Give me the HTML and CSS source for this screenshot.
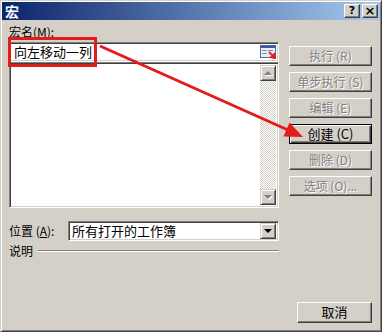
FILE: index.html
```html
<!DOCTYPE html>
<html lang="zh-CN">
<head>
    <meta charset="UTF-8">
    <meta name="viewport" content="width=device-width, initial-scale=1.0">
    <title>宏</title>
    <link rel="stylesheet" href="styles.css">
</head>
<body>
    <div class="dialog">
        <div class="title-bar">
            <span class="title">宏</span>
            <div class="title-buttons">
                <span class="tb-btn">?</span>
                <span class="tb-btn close">×</span>
            </div>
        </div>

        <div class="dialog-body">
            <div class="left-col">
                <div class="field-label">宏名(<u>M</u>):</div>
                <div class="name-input">
                    <span class="name-text">向左移动一列</span>
                    <span class="input-icon">
                        <svg width="16" height="14" viewBox="0 0 16 14">
                            <rect x="0.5" y="0.5" width="15" height="12" fill="#e8eef8" stroke="#4a6a9c"/>
                            <rect x="1" y="1" width="14" height="2" fill="#3a5a9c"/>
                            <rect x="2" y="5" width="5" height="1" fill="#7a8aaa"/>
                            <rect x="2" y="8" width="5" height="1" fill="#7a8aaa"/>
                            <rect x="8" y="5" width="5" height="1" fill="#7a8aaa"/>
                            <path d="M9 7 L15 13 M10 12 L15 13 L14 8" stroke="#e02020" stroke-width="2" fill="none"/>
                        </svg>
                    </span>
                </div>
                <div class="macro-list">
                    <div class="list-area"></div>
                    <div class="scrollbar">
                        <span class="sb-btn"><span class="arrow-up"></span></span>
                        <span class="sb-track"></span>
                        <span class="sb-btn"><span class="arrow-down"></span></span>
                    </div>
                </div>
                <div class="location-row">
                    <span class="loc-label">位置 (<u>A</u>):</span>
                    <div class="combo">
                        <span class="combo-text">所有打开的工作簿</span>
                        <span class="sb-btn"><span class="arrow-down dark"></span></span>
                    </div>
                </div>
                <div class="desc-row">
                    <span>说明</span>
                    <span class="rule"></span>
                </div>
            </div>

            <div class="right-col">
                <span class="btn disabled">执行 (R)</span>
                <span class="btn disabled">单步执行 (S)</span>
                <span class="btn disabled">编辑 (E)</span>
                <span class="btn default">创建 (C)</span>
                <span class="btn disabled">删除 (D)</span>
                <span class="btn disabled">选项 (O)...</span>
                <span class="btn cancel">取消</span>
            </div>
        </div>

        <!-- red annotation drawn over the dialog -->
        <div class="mark-box"></div>
        <svg class="mark-arrow" width="382" height="332" viewBox="0 0 382 332">
            <line x1="100" y1="46" x2="288" y2="130" stroke="#e31b1b" stroke-width="3"/>
            <polygon points="303,137 283.5,136.5 289.5,122.5" fill="#e31b1b"/>
        </svg>
    </div>
</body>
</html>
```

FILE: styles.css
```css
* {
    margin: 0;
    padding: 0;
    box-sizing: border-box;
}

body {
    width: 382px;
    height: 332px;
    overflow: hidden;
    font-family: "Noto Sans CJK SC", "DejaVu Sans", sans-serif;
    font-size: 12px;
    color: #000;
}

u {
    text-decoration: underline;
    text-underline-offset: 1px;
}

.dialog {
    position: relative;
    width: 382px;
    height: 332px;
    background-color: #d4d0c8;
    border: 1px solid;
    border-color: #d4d0c8 #404040 #404040 #d4d0c8;
    box-shadow: inset 1px 1px #fff, inset -1px -1px #808080;
    padding: 1px;
    display: flex;
    flex-direction: column;
}

/* title bar */

.title-bar {
    height: 18px;
    display: flex;
    align-items: center;
    justify-content: space-between;
    background: linear-gradient(to right, #0a246a, #a6caf0);
    padding: 0 2px 0 3px;
}

.title {
    color: #fff;
    font-weight: bold;
    font-size: 14px;
    line-height: 18px;
}

.title-buttons {
    display: flex;
    gap: 2px;
}

.tb-btn {
    width: 16px;
    height: 14px;
    background-color: #d4d0c8;
    border: 1px solid;
    border-color: #fff #404040 #404040 #fff;
    box-shadow: inset -1px -1px #808080;
    font-family: "DejaVu Sans", sans-serif;
    font-weight: bold;
    font-size: 11px;
    line-height: 12px;
    text-align: center;
}

.tb-btn.close {
    font-size: 13px;
}

/* body */

.dialog-body {
    flex: 1;
    display: flex;
    gap: 10px;
    padding: 5px 8px 7px 7px;
}

.left-col {
    width: 270px;
    display: flex;
    flex-direction: column;
}

.field-label {
    line-height: 14px;
    height: 14px;
    margin-bottom: 3px;
}

.name-input,
.macro-list,
.combo {
    background-color: #fff;
    border: 1px solid;
    border-color: #808080 #fff #fff #808080;
    box-shadow: inset 1px 1px #404040, inset -1px -1px #d4d0c8;
}

.name-input {
    height: 20px;
    display: flex;
    align-items: center;
    justify-content: space-between;
    padding: 0 2px 0 4px;
}

.name-text {
    font-size: 13px;
    line-height: 16px;
}

.input-icon {
    display: flex;
}

.macro-list {
    height: 146px;
    display: flex;
    padding: 2px;
}

.list-area {
    flex: 1;
}

.scrollbar {
    width: 16px;
    display: flex;
    flex-direction: column;
}

.sb-btn {
    width: 16px;
    height: 16px;
    flex-shrink: 0;
    background-color: #d4d0c8;
    border: 1px solid;
    border-color: #d4d0c8 #404040 #404040 #d4d0c8;
    box-shadow: inset 1px 1px #fff, inset -1px -1px #808080;
    display: flex;
    align-items: center;
    justify-content: center;
}

.sb-track {
    flex: 1;
    background-color: #fff;
    background-image: repeating-conic-gradient(#d4d0c8 0 25%, #fff 0 50%);
    background-size: 2px 2px;
}

.arrow-up,
.arrow-down {
    width: 0;
    height: 0;
    border-left: 4px solid transparent;
    border-right: 4px solid transparent;
    filter: drop-shadow(1px 1px 0 #fff);
}

.arrow-up {
    border-bottom: 4px solid #808080;
}

.arrow-down {
    border-top: 4px solid #808080;
}

.arrow-down.dark {
    border-top-color: #000;
    filter: none;
}

.location-row {
    margin-top: 13px;
    height: 20px;
    display: flex;
    align-items: center;
}

.loc-label {
    width: 59px;
    line-height: 14px;
}

.combo {
    flex: 1;
    height: 20px;
    display: flex;
    align-items: center;
    justify-content: space-between;
    padding: 2px;
}

.combo-text {
    font-size: 13px;
    line-height: 16px;
    padding-left: 1px;
}

.desc-row {
    margin-top: 3px;
    display: flex;
    align-items: center;
    gap: 5px;
    line-height: 14px;
}

.rule {
    flex: 1;
    height: 2px;
    border-top: 1px solid #808080;
    border-bottom: 1px solid #fff;
}

/* buttons */

.right-col {
    flex: 1;
    display: flex;
    flex-direction: column;
    align-items: flex-end;
    gap: 6px;
    padding-top: 21px;
}

.btn {
    width: 83px;
    height: 20px;
    background-color: #d4d0c8;
    border: 1px solid;
    border-color: #fff #404040 #404040 #fff;
    box-shadow: inset -1px -1px #808080;
    text-align: center;
    line-height: 17px;
    white-space: nowrap;
}

.btn.disabled {
    color: #808080;
    text-shadow: 1px 1px 0 #fff;
}

.btn.default {
    border: 1px solid #000;
    box-shadow: inset 1px 1px #fff, inset -1px -1px #404040, inset -2px -2px #808080;
    font-size: 13px;
}

.btn.cancel {
    width: 75px;
    height: 21px;
    margin-top: auto;
    line-height: 18px;
    font-size: 13px;
}

/* red annotation */

.mark-box {
    position: absolute;
    left: 7px;
    top: 36px;
    width: 89px;
    height: 30px;
    border: 3px solid #e31b1b;
}

.mark-arrow {
    position: absolute;
    left: -1px;
    top: -1px;
}
```
